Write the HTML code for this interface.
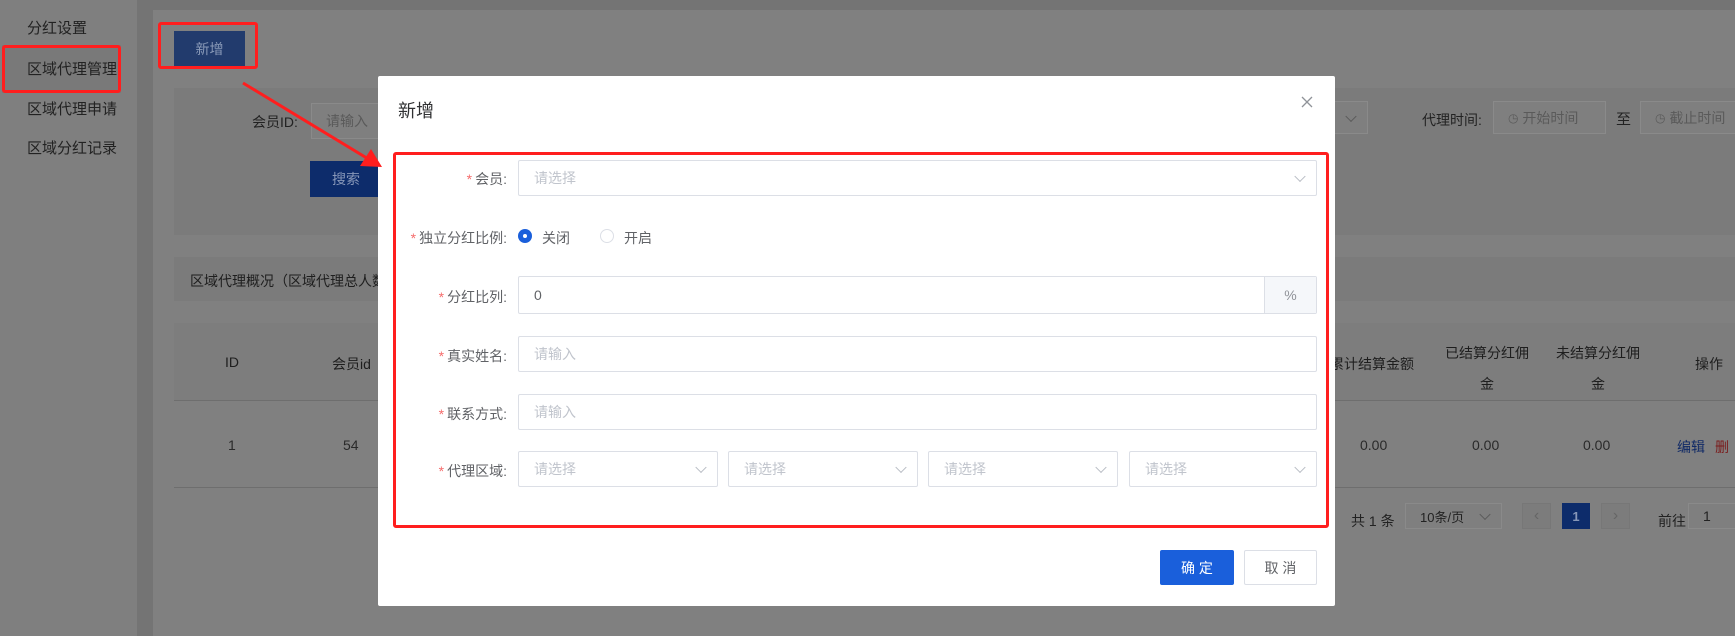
<!DOCTYPE html>
<html><head><meta charset="utf-8"><style>
*{margin:0;padding:0;box-sizing:border-box}
body{width:1735px;height:636px;overflow:hidden;position:relative;background:#747474;font-family:"Liberation Sans","Noto Sans CJK SC",sans-serif;font-size:14px;color:#1e1e1e}
.a{position:absolute}
.sb{left:0;top:0;width:137px;height:636px;background:#7f7f7f}
.mi{left:27px;font-size:15px;color:#222}
.main{left:153px;top:10px;width:1582px;height:626px;background:#808080}
.inp{border:1px solid #8a8a8a;background:#7f7f7f;color:#5a5a5a;font-size:14px;padding-left:14px;display:flex;align-items:center}
.th{font-size:14px;color:#1e1e1e;text-align:center}
.dlg{left:378px;top:76px;width:957px;height:530px;background:#fff;border-radius:2px}
.lbl{width:140px;text-align:right;font-size:14px;color:#606266}
.lbl b{color:#f56c6c;font-weight:normal;margin-right:3px}
.fi{border:1px solid #dcdfe6;border-radius:2px;background:#fff;color:#c0c4cc;font-size:14px;padding-left:15px;display:flex;align-items:center}
.chev{position:absolute;right:12px;top:50%;width:8px;height:8px;border-right:1px solid #b8bcc4;border-bottom:1px solid #b8bcc4;transform:translateY(-70%) rotate(45deg)}
.rbox{border:3px solid #ff1e1e;border-radius:3px}
.pg{border:1px solid #777;background:#7c7c7c;color:#666;font-size:16px;display:flex;align-items:center;justify-content:center}
</style></head><body>
<div class="a sb"></div>
<div class="a" style="left:2px;top:45px;width:119px;height:48px;background:#797979"></div>
<div class="a mi" style="top:17px">分红设置</div>
<div class="a mi" style="top:58px">区域代理管理</div>
<div class="a mi" style="top:98px">区域代理申请</div>
<div class="a mi" style="top:137px">区域分红记录</div>
<div class="a rbox" style="left:2px;top:45px;width:119px;height:48px"></div>

<div class="a main"></div>
<div class="a" style="left:174px;top:31px;width:71px;height:36px;background:#223b6d;color:#8a9ab8;font-size:14px;display:flex;align-items:center;justify-content:center">新增</div>
<div class="a rbox" style="left:158px;top:22px;width:100px;height:47px"></div>

<div class="a" style="left:174px;top:88px;width:1561px;height:147px;background:#7b7b7b"></div>
<div class="a" style="left:252px;top:112px;font-size:14px;color:#222">会员ID:</div>
<div class="a inp" style="left:311px;top:103px;width:70px;height:36px">请输入</div>
<div class="a" style="left:310px;top:161px;width:72px;height:36px;background:#0d2c6b;color:#8797b8;font-size:14px;display:flex;align-items:center;justify-content:center">搜索</div>
<div class="a inp" style="left:1300px;top:101px;width:68px;height:33px"><span class="chev" style="border-color:#5a5a5a"></span></div>
<div class="a" style="left:1422px;top:110px;font-size:14px;color:#222">代理时间:</div>
<div class="a inp" style="left:1493px;top:101px;width:113px;height:33px"><span style="font-size:12px">◷</span>&nbsp;开始时间</div>
<div class="a" style="left:1616px;top:108px;font-size:15px;color:#222">至</div>
<div class="a inp" style="left:1640px;top:101px;width:100px;height:33px"><span style="font-size:12px">◷</span>&nbsp;截止时间</div>

<div class="a" style="left:174px;top:257px;width:1561px;height:44px;background:#7b7b7b"></div>
<div class="a" style="left:190px;top:271px;font-size:14px;color:#1e1e1e">区域代理概况（区域代理总人数</div>

<div class="a" style="left:174px;top:323px;width:1561px;height:78px;background:#7d7d7d;border-bottom:1px solid #6e6e6e"></div>
<div class="a th" style="left:225px;top:354px">ID</div>
<div class="a th" style="left:332px;top:354px">会员id</div>
<div class="a th" style="left:1330px;top:354px">累计结算金额</div>
<div class="a th" style="left:1445px;top:338px;line-height:31px">已结算分红佣<br>金</div>
<div class="a th" style="left:1556px;top:338px;line-height:31px">未结算分红佣<br>金</div>
<div class="a th" style="left:1695px;top:354px">操作</div>
<div class="a" style="left:174px;top:487px;width:1561px;height:1px;background:#6e6e6e"></div>
<div class="a th" style="left:228px;top:437px;color:#2a2a2a">1</div>
<div class="a th" style="left:343px;top:437px;color:#2a2a2a">54</div>
<div class="a th" style="left:1360px;top:437px;color:#2a2a2a">0.00</div>
<div class="a th" style="left:1472px;top:437px;color:#2a2a2a">0.00</div>
<div class="a th" style="left:1583px;top:437px;color:#2a2a2a">0.00</div>
<div class="a th" style="left:1677px;top:437px;color:#112a66">编辑</div>
<div class="a th" style="left:1715px;top:437px;color:#7a1a1a">删</div>

<div class="a" style="left:1351px;top:511px;font-size:14px;color:#222">共 1 条</div>
<div class="a inp" style="left:1405px;top:503px;width:97px;height:26px;color:#222;font-size:13px">10条/页<span class="chev" style="border-color:#5a5a5a"></span></div>
<div class="a pg" style="left:1522px;top:503px;width:29px;height:26px">‹</div>
<div class="a" style="left:1562px;top:503px;width:28px;height:26px;background:#0d2c6b;color:#8797b8;font-size:13px;font-weight:bold;display:flex;align-items:center;justify-content:center">1</div>
<div class="a pg" style="left:1601px;top:503px;width:29px;height:26px">›</div>
<div class="a" style="left:1658px;top:511px;font-size:14px;color:#222">前往</div>
<div class="a inp" style="left:1688px;top:503px;width:60px;height:26px;color:#222">1</div>

<div class="a dlg"></div>
<div class="a" style="left:398px;top:97px;font-size:18px;color:#303133">新增</div>
<svg class="a" style="left:1301px;top:96px" width="12" height="12"><path d="M1 1L11 11M11 1L1 11" stroke="#909399" stroke-width="1.3"/></svg>

<div class="a lbl" style="left:367px;top:169px"><b>*</b>会员:</div>
<div class="a fi" style="left:518px;top:160px;width:799px;height:36px">请选择<span class="chev"></span></div>

<div class="a lbl" style="left:367px;top:228px"><b>*</b>独立分红比例:</div>
<div class="a" style="left:518px;top:229px;width:14px;height:14px;border-radius:50%;background:#1a5fdb"></div>
<div class="a" style="left:523px;top:234px;width:4px;height:4px;border-radius:50%;background:#fff"></div>
<div class="a" style="left:542px;top:228px;font-size:14px;color:#606266">关闭</div>
<div class="a" style="left:600px;top:229px;width:14px;height:14px;border-radius:50%;border:1px solid #dcdfe6"></div>
<div class="a" style="left:624px;top:228px;font-size:14px;color:#606266">开启</div>

<div class="a lbl" style="left:367px;top:287px"><b>*</b>分红比列:</div>
<div class="a fi" style="left:518px;top:276px;width:799px;height:38px;color:#606266">0</div>
<div class="a" style="left:1264px;top:277px;width:52px;height:36px;background:#f5f7fa;border-left:1px solid #dcdfe6;color:#909399;font-size:14px;display:flex;align-items:center;justify-content:center">%</div>

<div class="a lbl" style="left:367px;top:346px"><b>*</b>真实姓名:</div>
<div class="a fi" style="left:518px;top:336px;width:799px;height:36px">请输入</div>

<div class="a lbl" style="left:367px;top:404px"><b>*</b>联系方式:</div>
<div class="a fi" style="left:518px;top:394px;width:799px;height:36px">请输入</div>

<div class="a lbl" style="left:367px;top:461px"><b>*</b>代理区域:</div>
<div class="a fi" style="left:518px;top:451px;width:200px;height:36px">请选择<span class="chev"></span></div>
<div class="a fi" style="left:728px;top:451px;width:190px;height:36px">请选择<span class="chev"></span></div>
<div class="a fi" style="left:928px;top:451px;width:190px;height:36px">请选择<span class="chev"></span></div>
<div class="a fi" style="left:1129px;top:451px;width:188px;height:36px">请选择<span class="chev"></span></div>

<div class="a rbox" style="left:393px;top:152px;width:936px;height:376px"></div>

<div class="a" style="left:1160px;top:550px;width:74px;height:35px;background:#1a5fdb;color:#fff;font-size:14px;display:flex;align-items:center;justify-content:center;border-radius:2px">确 定</div>
<div class="a" style="left:1244px;top:550px;width:73px;height:35px;border:1px solid #dcdfe6;color:#606266;font-size:14px;display:flex;align-items:center;justify-content:center;border-radius:2px">取 消</div>

<svg class="a" style="left:0;top:0" width="1735" height="636">
<line x1="243" y1="83" x2="370" y2="160" stroke="#ff1e1e" stroke-width="3"/>
<polygon points="382,167 360,166 371,149" fill="#ff1e1e"/>
</svg>
</body></html>
